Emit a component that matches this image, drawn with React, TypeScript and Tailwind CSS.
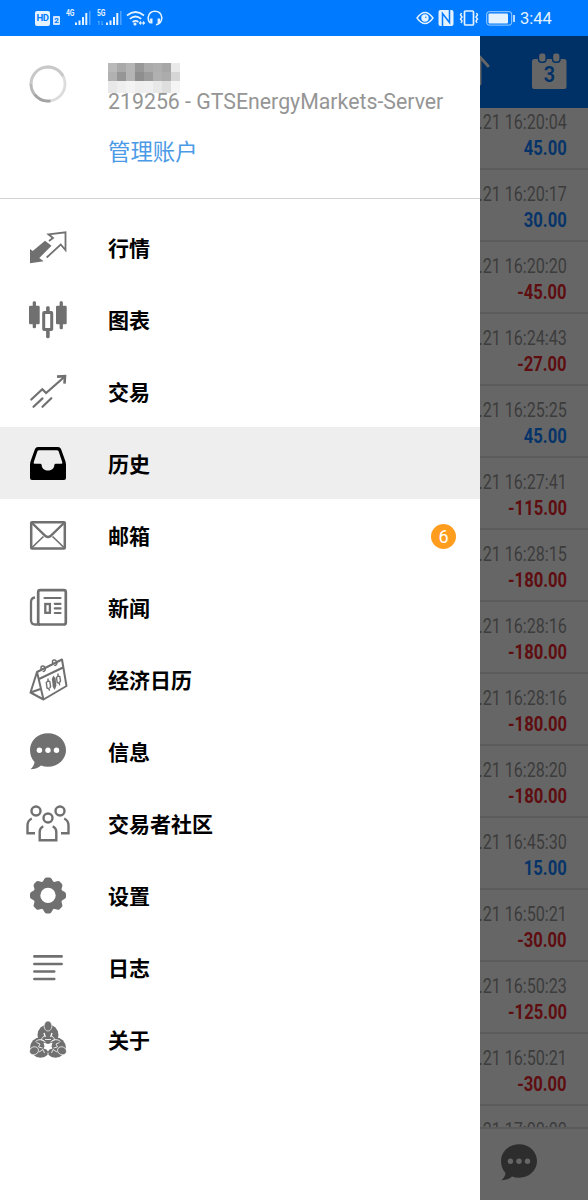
import type { ReactNode } from "react";

const font = "font-['Roboto','Noto_Sans_CJK_SC',sans-serif]";

function Icon({ children, color = "text-[#707070]" }: { children: ReactNode; color?: string }) {
  return (
    <svg viewBox="0 0 48 48" className={`size-12 shrink-0 ${color}`} fill="none" stroke="currentColor">
      {children}
    </svg>
  );
}

const QuotesIcon = (
  <Icon>
    <path d="M6 25l2.7 2L21 16.7l6.5 5L15.3 34l4.4 3.3L6 39.3z" fill="currentColor" stroke="none" />
    <path d="M25 17l4-3-4.5-3.7 17-2V26l-4.8-5.5-14 13" strokeWidth="1.8" />
  </Icon>
);
const ChartIcon = (
  <Icon>
    <g fill="currentColor" stroke="none">
      <rect x="5" y="9.7" width="10.7" height="18.5" rx="1.2" />
      <rect x="8.7" y="5.3" width="3.3" height="27" rx="1.4" />
      <rect x="22.1" y="10.3" width="3.6" height="6" rx="1.4" />
      <rect x="22.1" y="33" width="3.6" height="9.2" rx="1.4" />
      <rect x="32" y="9.7" width="10.7" height="18.5" rx="1.2" />
      <rect x="35.6" y="5.3" width="3.3" height="28" rx="1.4" />
    </g>
    <rect x="19.7" y="16.5" width="8" height="17" rx="0.5" strokeWidth="3" />
  </Icon>
);
const TradeIcon = (
  <Icon>
    <path d="M7.3 31.5l11-10.3 3.8 3.9L40 9.2M9.5 38.8l9-8.4M18.5 38.8l8.8-8.6" strokeWidth="2.2" strokeLinecap="round" />
    <path d="M33 8.6l8-.5-.5 7.6" strokeWidth="2.6" />
  </Icon>
);
const HistoryIcon = (
  <Icon color="text-black">
    <path
      fill="currentColor"
      stroke="none"
      fillRule="evenodd"
      d="M14 7h20q2.2 0 3 2l3.8 10.5q1.2 3 1.2 5V38q0 2-2 2H8q-2 0-2-2V24.5q0-2 1.2-5L11 9q.8-2 3-2zM15 10.3q-1.2 0-1.6 1l-3.7 11q-.3 1.5 1 1.5h5.8q1.2 0 1.2 1.5c.3 7 12.3 7 12.6 0q0-1.500 1.200-1.500h5.800q1.300 0 1-1.500l-3.700-11q-.4-1-1.600-1z"
    />
  </Icon>
);
const MailIcon = (
  <Icon>
    <rect x="7.2" y="10.2" width="33.6" height="26.3" rx="0.8" strokeWidth="2.5" />
    <path d="M8 11l13.500 13q2.500 2 5 0L40 11" strokeWidth="2.4" />
    <path d="M8 35.500l11.500-11M40 35.500L28.500 24.500" strokeWidth="1.7" />
  </Icon>
);
const NewsIcon = (
  <Icon>
    <rect x="14.2" y="6.2" width="27.6" height="34.3" rx="2" strokeWidth="2.7" />
    <path d="M11 13.500Q7 14 7 18v18q0 4.500 4 4.500h5" strokeWidth="2.3" />
    <path d="M20.500 14h16M30.800 19.800h5.700M30.800 24.400h5.700M30.800 29h5.700" strokeWidth="2.2" strokeLinecap="round" />
    <rect x="21.300" y="20" width="4.600" height="8.800" strokeWidth="2.3" />
  </Icon>
);
const CalendarIcon = (
  <Icon>
    <path d="M13 16l25-12.500 4.500 26.500-23 13.500zM14 23.500l25-12M13 16L6.500 36.500l13 7M6.500 36.500L16.500 33" strokeWidth="2" strokeLinejoin="round" />
    <path d="M17.500 14q-1.500-3.500 1-4t2.800 3.600q-.8 2.500-2.600 1.500M29 8q-1.500-3.500 1-4t2.800 3.600q-.8 2.500-2.600 1.500" strokeWidth="1.5" />
    <path d="M24 22.500v2.500l-1.700 1.500.7 5.500 2 .8.600 2M25.600 32l1-1.500-.8-5-1.800-.5M34 17.500v2.500l-1.500 1.500.7 5 2 .8.500 2M35.500 26.500l1-1.500-.7-4.500L34 20" strokeWidth="1.4" />
    <path d="M27.800 23l1.600-3.500 2.200 3 .8 7-1.600 4.500-2-3z" fill="currentColor" stroke="none" />
  </Icon>
);

function Bubble({ color, dots }: { color: string; dots: string }) {
  return (
    <Icon color={color}>
      <path
        d="M24 5.300c10 0 18 7.300 18 16.700s-8 16.700-18 16.700c-2.500 0-4.800-.4-7-1.200-2.500 2.400-6 3.600-10.500 3.700 2.200-1.700 3.700-4.200 4-7.200C7.700 31 6 26.800 6 22 6 12.600 14 5.300 24 5.300z"
        fill="currentColor"
        stroke="none"
      />
      <g className={dots} fill="currentColor" stroke="none">
        <circle cx="15.400" cy="22.300" r="2.700" />
        <circle cx="24" cy="22.300" r="2.700" />
        <circle cx="32.500" cy="22.300" r="2.700" />
      </g>
    </Icon>
  );
}

const CommunityIcon = (
  <Icon>
    <g strokeWidth="2.400">
      <circle cx="12" cy="11" r="4.500" />
      <circle cx="36" cy="11" r="4.500" />
      <circle cx="24" cy="18" r="4.500" />
      <path d="M19.300 26.300Q15.700 28 15.700 32v8.300h16.600V32q0-4-3.600-5.700" />
      <path d="M7.800 18.500Q3.500 20.500 3.500 25.500v7.800H11M40.200 18.500q4.300 2 4.300 7v7.800H37" />
    </g>
  </Icon>
);
const SettingsIcon = (
  <Icon>
    <g fill="currentColor" stroke="none">
      <path
        fillRule="evenodd"
        d="M24 8.800a14.600 14.600 0 1 0 0 29.200 14.600 14.600 0 1 0 0-29.200zM24 15.700a7.700 7.700 0 1 1 0 15.400 7.700 7.700 0 1 1 0-15.400z"
      />
      {[0, 45, 90, 135, 180, 225, 270, 315].map((a) => (
        <path key={a} transform={`rotate(${a} 24 23.400)`} d="M18 11l2.300-4Q21 5.400 22.500 5.400h3q1.500 0 2.200 1.600l2.300 4z" />
      ))}
    </g>
  </Icon>
);
const JournalIcon = (
  <Icon>
    <path d="M10.400 12.400h27.200M10.400 20h27.200M10.400 27.500h19.800M10.400 35h19.800" strokeWidth="2.700" strokeLinecap="round" />
  </Icon>
);
const AboutIcon = (
  <Icon>
    <g fill="currentColor" stroke="none">
      <circle cx="24" cy="19" r="10.500" />
      <circle cx="16.500" cy="31.500" r="10.300" />
      <circle cx="31.500" cy="31.500" r="10.300" />
    </g>
    <g stroke="white" fill="none" strokeWidth="0.800">
      <path d="M20 20l-3 3.500 3 1.500M28 20l3 3.500-3 1.500M21 23.500h6" />
      <path d="M12.500 26.500l3.500 1.500-1.500 3 4 1M35.500 26.500l-3.500 1.500 1.500 3-4 1M15 36l4-2.500 1.500 3.500M33 36l-4-2.500-1.500 3.500" />
      <path d="M24 36.500v5M11.500 25.500q4.500-4 10 .5M36.500 25.500q-4.500-4-10 .5" />
    </g>
    <path d="M19.500 26.500l4.500 1.500 4.500-1.500-1 4 1 2-3 1-1.500 2-1.500-2-3-1 1-2z" fill="white" stroke="none" />
    <path d="M20 17l1.300 4M28 17l-1.300 4" stroke="white" strokeWidth="1.300" />
    <g fill="currentColor" stroke="white" strokeWidth="0.700">
      <ellipse cx="24" cy="10" rx="3.900" ry="5" />
      <ellipse cx="10" cy="34.800" rx="4.600" ry="3.900" transform="rotate(-25 10 34.800)" />
      <ellipse cx="38" cy="34.800" rx="4.600" ry="3.900" transform="rotate(25 38 34.800)" />
    </g>
  </Icon>
);

const items: { label: string; icon: ReactNode; active?: boolean; badge?: string }[] = [
  { label: "行情", icon: QuotesIcon },
  { label: "图表", icon: ChartIcon },
  { label: "交易", icon: TradeIcon },
  { label: "历史", icon: HistoryIcon, active: true },
  { label: "邮箱", icon: MailIcon, badge: "6" },
  { label: "新闻", icon: NewsIcon },
  { label: "经济日历", icon: CalendarIcon },
  { label: "信息", icon: <Bubble color="text-[#707070]" dots="text-white" /> },
  { label: "交易者社区", icon: CommunityIcon },
  { label: "设置", icon: SettingsIcon },
  { label: "日志", icon: JournalIcon },
  { label: "关于", icon: AboutIcon },
];

const deals: [string, string][] = [
  ["16:20:04", "45.00"],
  ["16:20:17", "30.00"],
  ["16:20:20", "-45.00"],
  ["16:24:43", "-27.00"],
  ["16:25:25", "45.00"],
  ["16:27:41", "-115.00"],
  ["16:28:15", "-180.00"],
  ["16:28:16", "-180.00"],
  ["16:28:16", "-180.00"],
  ["16:28:20", "-180.00"],
  ["16:45:30", "15.00"],
  ["16:50:21", "-30.00"],
  ["16:50:23", "-125.00"],
  ["16:50:21", "-30.00"],
  ["17:00:00", ""],
];

const mosaic = [
  "bg-[#b9b9b9]", "bg-[#a9a9a9]", "bg-[#b5b5b5]", "bg-[#989898]", "bg-[#aaaaaa]", "bg-[#aeaeae]", "bg-[#a6a6a6]", "bg-[#e9e9e9]",
  "bg-[#b1b1b1]", "bg-[#969696]", "bg-[#b4b4b4]", "bg-[#8e8e8e]", "bg-[#9b9b9b]", "bg-[#b0b0b0]", "bg-[#acacac]", "bg-[#d6d6d6]",
  "bg-[#e8e8e8]", "bg-[#eeeeee]", "bg-[#f3f3f3]", "bg-[#eeeeee]", "bg-[#f0f0f0]", "bg-[#e8e8e8]", "bg-[#dedede]", "bg-[#f5f5f5]",
];

function Signal({ label, arrows }: { label: string; arrows?: boolean }) {
  return (
    <div className="relative h-4 w-[25px]">
      <span className="absolute -top-px left-0 origin-left scale-x-[0.750] text-[9px] leading-[9px] font-bold">{label}</span>
      <svg viewBox="0 0 25 16" className="size-full" fill="none" stroke="currentColor">
        <path d="M10 12.500v2.500M13.500 10.500v4.500M17 7v8M20.300 3v12" strokeWidth="2" />
        <path d="M23.800 1v14" strokeWidth="1.500" opacity="0.350" />
        {arrows && <path d="M2 15v-4l-1 1M5 11v4l1-1" strokeWidth="0.900" opacity="0.450" />}
      </svg>
    </div>
  );
}

function StatusBar() {
  return (
    <header className="flex h-9 shrink-0 items-center bg-[#007aff] pl-[35px] text-[#e5f2ff]">
      <span className="flex h-[15px] w-[15px] items-center justify-center rounded-[2px] bg-[#e5f2ff] text-[9.500px] font-bold tracking-tighter text-[#007aff]">HD</span>
      <span className="mt-[5px] ml-[3px] flex h-[9px] w-[7px] items-center justify-center rounded-[1px] bg-[#d0e7ff] text-[8px] font-bold text-[#007aff]">2</span>
      <div className="ml-[6px]"><Signal label="4G" /></div>
      <div className="ml-[6px]"><Signal label="5G" arrows /></div>
      <svg viewBox="0 0 20 18" className="ml-[4px] h-[18px] w-5" fill="none" stroke="currentColor" strokeWidth="1.700">
        <path d="M1 6.500q8.500-7 17 0M3.800 9.800q5.700-4.600 11.400 0M6.600 13q2.900-2.300 5.800 0" />
        <circle cx="9" cy="15" r="0.700" fill="currentColor" />
        <path d="M15 12.500l-1.500 1.500 1.500 1.500M17 12.500l1.500 1.500-1.500 1.500M14 14h4" strokeWidth="1.100" />
      </svg>
      <svg viewBox="0 0 16 18" className="ml-px h-[18px] w-4" fill="none" stroke="currentColor" strokeWidth="1.600">
        <path d="M3 14Q1 12 1.200 8.500 2 2.300 8 2.300t6.800 6.200Q14.800 14.500 9 15.800" />
        <path d="M4.300 9.500v5M11.800 9.500v5" strokeWidth="2.400" />
      </svg>
      <div className="ml-auto flex items-center pr-9">
        <svg viewBox="0 0 18 14" className="h-[14px] w-[18px]" fill="none" stroke="currentColor" strokeWidth="1.400">
          <path d="M1 7q8-11 16 0-8 11-16 0z" />
          <circle cx="9" cy="7" r="3" fill="currentColor" />
          <circle cx="9.800" cy="6.200" r="0.700" fill="#007aff" stroke="none" />
        </svg>
        <svg viewBox="0 0 16 16" className="ml-[4px] size-4">
          <rect width="15" height="16" x="0.500" rx="2" fill="currentColor" />
          <path d="M4.500 16V3.500l7 9V0" fill="none" stroke="#007aff" strokeWidth="1.500" />
        </svg>
        <svg viewBox="0 0 20 16" className="ml-[5px] h-4 w-5" fill="none" stroke="currentColor">
          <rect x="5.500" y="1" width="9" height="14" rx="1" strokeWidth="1.700" />
          <path d="M2.500 3l-1 2 1.500 2-1.500 2 1.500 2-1 2M17.500 3l1 2-1.500 2 1.500 2-1.500 2 1 2" strokeWidth="1.500" />
        </svg>
        <svg viewBox="0 0 30 15" className="ml-[7px] h-[15px] w-[30px]">
          <rect x="0.700" y="0.700" width="25" height="13.400" rx="2.500" fill="none" stroke="currentColor" strokeWidth="1" opacity="0.700" />
          <rect x="2.500" y="2.500" width="19.500" height="10" rx="1" fill="currentColor" />
          <path d="M28 4v7" stroke="currentColor" strokeWidth="1.600" />
        </svg>
        <span className="ml-1 w-8 pt-px text-[16.500px] leading-9 whitespace-nowrap">3:44</span>
      </div>
    </header>
  );
}

function Drawer() {
  return (
    <aside className="flex w-[480px] shrink-0 flex-col bg-white">
      <section className="flex h-[163px] shrink-0 border-b border-[#d4d4d4]">
        <svg viewBox="0 0 38 38" className="mt-[29px] ml-[29px] size-[38px] shrink-0" fill="none" strokeWidth="2.800">
          <circle cx="19" cy="19" r="17" stroke="#dcdcdc" />
          <path d="M34 11A17 17 0 0 0 2 19" stroke="#c8c8c8" />
          <path d="M2 19a17 17 0 0 0 3.500 10.400" stroke="#b8b8b8" />
          <path d="M5.500 29.400a17 17 0 0 0 16 6.400" stroke="#a3a3a3" />
        </svg>
        <div className="ml-[41px] flex flex-col items-start">
          <div className="mt-[27px] grid w-[72px] grid-cols-8 grid-rows-[9px_9px_12px]">
            {mosaic.map((c, i) => (
              <span key={i} className={c} />
            ))}
          </div>
          <p className="-mt-[3px] text-[21.300px] leading-6 whitespace-nowrap text-[#959595]">219256 - GTSEnergyMarkets-Server</p>
          <p className="mt-[24px] text-[22.400px] leading-7 text-[#4a9ae6]">管理账户</p>
        </div>
      </section>
      <nav className="flex flex-col pt-3">
        {items.map((item) => (
          <div key={item.label} className={`flex h-18 items-center pt-[2px] pr-6 pl-6 ${item.active ? "bg-[#eeeeee]" : ""}`}>
            {item.icon}
            <span className="ml-9 pt-[4px] text-[21px] font-bold text-black">{item.label}</span>
            {item.badge && (
              <span className="ml-auto flex size-[25px] items-center justify-center rounded-full bg-[#ff9d1e] text-[18px] text-white">{item.badge}</span>
            )}
          </div>
        ))}
      </nav>
    </aside>
  );
}

function History() {
  return (
    <main className="flex w-[108px] shrink-0 flex-col overflow-hidden bg-[#666666]">
      <div className="flex h-18 shrink-0 items-start bg-[#003166] text-[#666666]">
        <svg viewBox="0 0 20 36" className="mt-[17px] h-9 w-5" fill="none" stroke="currentColor" strokeWidth="2.800" strokeLinecap="round">
          <path d="M0 4v27M0 4l8 9" />
        </svg>
        <div className="relative mt-[16px] ml-[31px] h-[38px] w-9">
          <svg viewBox="0 0 36 38" className="size-full">
            <rect x="1" y="7" width="34.500" height="30" rx="2.500" fill="currentColor" />
            <rect x="7.500" y="0.700" width="7.600" height="9.500" rx="3" fill="currentColor" stroke="#003166" strokeWidth="1.400" />
            <rect x="21.500" y="0.700" width="7.600" height="9.500" rx="3" fill="currentColor" stroke="#003166" strokeWidth="1.400" />
          </svg>
          <span className="absolute inset-x-0 top-[11px] text-center text-[22px] leading-6 font-semibold text-[#003166]">
            <span className="inline-block scale-x-[0.900]">3</span>
          </span>
        </div>
      </div>
      <div className="h-[1019px] shrink-0 overflow-hidden">
        <div className="-mt-[10px] flex flex-col">
          {deals.map(([time, value], i) => (
            <div key={i} className="flex h-18 shrink-0 flex-col items-end border-b-2 border-[#5c5c5c] pt-[11px] pr-[21px] whitespace-nowrap">
              <span className="origin-right scale-x-[0.805] text-[20px] leading-[26px] text-[#3c3c3c]">.21 {time}</span>
              <span className={`origin-right scale-x-[0.830] text-[20px] leading-[26px] font-bold ${value.startsWith("-") ? "text-[#5e0d10]" : "text-[#063469]"}`}>
                {value}
              </span>
            </div>
          ))}
        </div>
      </div>
      <div className="flex h-[73px] shrink-0 border-t-2 border-[#5a5a5a] pt-[10px] pl-[15px]">
        <Bubble color="text-[#2d2d2d]" dots="text-[#666666]" />
      </div>
    </main>
  );
}

export default function App() {
  return (
    <div className={`flex h-[1200px] w-[588px] flex-col overflow-hidden bg-white ${font}`}>
      <StatusBar />
      <div className="flex min-h-0 flex-1">
        <Drawer />
        <History />
      </div>
    </div>
  );
}
